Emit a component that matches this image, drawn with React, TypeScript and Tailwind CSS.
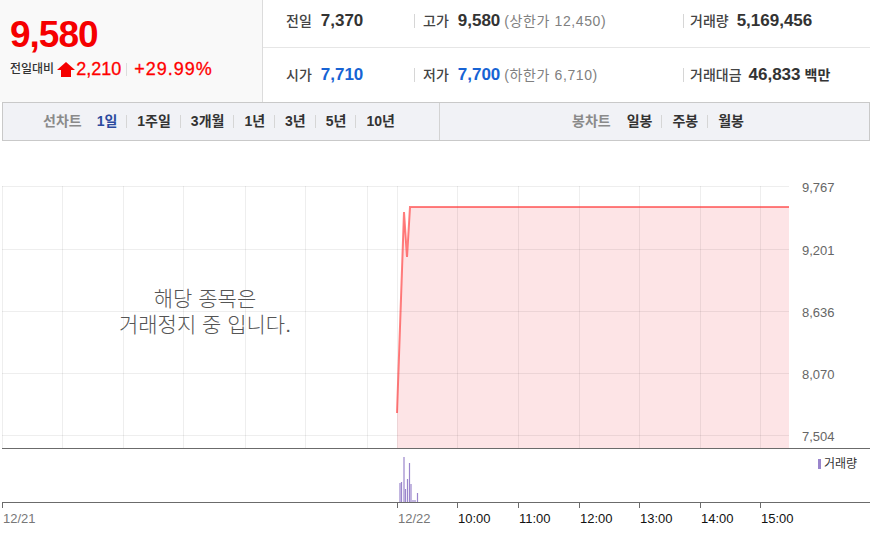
import React from "react";

const vLines = [2, 62, 123, 183, 245, 305, 367, 397, 457, 518, 579, 639, 700, 760];
const hLines = [186, 249, 311, 373, 435];
const yLabels = [
  { y: 186, t: "9,767" },
  { y: 249, t: "9,201" },
  { y: 311, t: "8,636" },
  { y: 373, t: "8,070" },
  { y: 435, t: "7,504" },
];
const ticks = [
  { x: 2, t: "12/21", gray: true },
  { x: 397, t: "12/22", gray: true },
  { x: 457, t: "10:00" },
  { x: 518, t: "11:00" },
  { x: 579, t: "12:00" },
  { x: 639, t: "13:00" },
  { x: 700, t: "14:00" },
  { x: 760, t: "15:00" },
];
const bars = [
  [400, 483],
  [401.5, 482],
  [404, 457],
  [405.5, 489],
  [407.5, 479],
  [409.5, 463],
  [411, 484],
  [413, 500],
  [415, 500],
  [417.5, 493],
];

function Sep({ h = 14, c = "#d6d6d6" }: { h?: number; c?: string }) {
  return <span className="inline-block w-px" style={{ height: h, background: c }} />;
}

function Chart() {
  const linePts = "397,413 404,212 407,257 410,207 789,207";
  const fillPts = "397,448 397,413 404,212 407,257 410,207 789,207 789,448";
  return (
    <svg width={870} height={406} viewBox="0 141 870 406" className="block">
      <polygon points={fillPts} fill="#fde4e6" />
      {hLines.map((y) => (
        <line key={y} x1={2} x2={789} y1={y + 0.5} y2={y + 0.5} stroke="rgba(0,0,0,0.065)" strokeWidth={1} />
      ))}
      {vLines.map((x) => (
        <line key={x} x1={x + 0.5} x2={x + 0.5} y1={186} y2={448} stroke="rgba(0,0,0,0.065)" strokeWidth={1} />
      ))}
      <polyline points={linePts} fill="none" stroke="#ff2a2a" strokeOpacity={0.6} strokeWidth={2} strokeLinejoin="miter" />
      {yLabels.map((l) => (
        <text key={l.t} x={802} y={l.y + 5.5} fontSize={13} fill="#666" fontFamily="Liberation Sans, Arial, sans-serif">
          {l.t}
        </text>
      ))}
      <line x1={2} x2={870} y1={448.5} y2={448.5} stroke="#6b6b6b" strokeWidth={1} />
      {bars.map(([x, y], i) => (
        <line key={i} x1={x} x2={x} y1={y} y2={502} stroke="#9a85cc" strokeWidth={1.2} />
      ))}
      <rect x={818} y={459} width={3} height={10} fill="#9a85cc" />
      <text x={824} y={468} fontSize={12} fill="#333" fontFamily="Noto Sans CJK KR, sans-serif">
        거래량
      </text>
      <line x1={2} x2={870} y1={502.5} y2={502.5} stroke="#6b6b6b" strokeWidth={1} />
      {ticks.map((t) => (
        <g key={t.t}>
          <line x1={t.x + 0.5} x2={t.x + 0.5} y1={502} y2={508} stroke="#6b6b6b" strokeWidth={1} />
          <text
            x={t.x + 1}
            y={523}
            fontSize={13}
            fill={t.gray ? "#777" : "#111"}
            fontFamily="Liberation Sans, Arial, sans-serif"
          >
            {t.t}
          </text>
        </g>
      ))}
    </svg>
  );
}

export default function App() {
  return (
    <div className="w-[870px] h-[547px] overflow-hidden bg-white font-['Liberation_Sans','Noto_Sans_CJK_KR',sans-serif]">
      {/* header */}
      <div className="flex h-[102px]">
        <div className="w-[263px] h-[102px] bg-[#f9f9f9] border-r border-[#dcdcdc] pl-[10px]">
          <div className="pt-[16px] text-[37px] leading-[37px] font-bold text-[#f50000] tracking-[-1px]">9,580</div>
          <div className="mt-[6px] flex items-center h-[20px]">
            <span className="text-[12px] text-[#333] font-medium">전일대비</span>
            <svg width="18" height="15" viewBox="0 0 18 15" className="ml-[3px]">
              <polygon points="9,0 18,8 14,8 14,15 4,15 4,8 0,8" fill="#f50000" />
            </svg>
            <span className="text-[18px] text-[#f00] ml-[1px] leading-[20px] [-webkit-text-stroke:0.3px_#f00]">2,210</span>
            <span className="ml-[5px] mr-[7px] inline-flex">
              <Sep h={13} c="#dddddd" />
            </span>
            <span className="text-[18px] text-[#f00] leading-[20px] tracking-[1px] [-webkit-text-stroke:0.3px_#f00]">+29.99%</span>
          </div>
        </div>
        <div className="flex-1 flex flex-col">
          <div className="h-[48px] pb-[6px] flex items-center border-b border-[#e6e6e6]">
            <div className="w-[128px] ml-[23px] flex items-baseline">
              <span className="text-[14px] text-[#444] font-medium">전일</span>
              <span className="ml-[9px] text-[17px] font-bold text-[#333]">7,370</span>
            </div>
            <Sep />
            <div className="w-[268px] pl-[8px] flex items-baseline">
              <span className="text-[14px] text-[#444] font-medium">고가</span>
              <span className="ml-[9px] text-[17px] font-bold text-[#333]">9,580</span>
              <span className="ml-[4px] text-[14px] text-[#808080] tracking-[0.6px]">(상한가 12,450)</span>
            </div>
            <Sep />
            <div className="pl-[6px] flex items-baseline">
              <span className="text-[14px] text-[#444] font-medium">거래량</span>
              <span className="ml-[8px] text-[17px] font-bold text-[#333]">5,169,456</span>
            </div>
          </div>
          <div className="flex-1 flex items-center">
            <div className="w-[128px] ml-[23px] flex items-baseline">
              <span className="text-[14px] text-[#444] font-medium">시가</span>
              <span className="ml-[9px] text-[17px] font-bold text-[#1763d4]">7,710</span>
            </div>
            <Sep />
            <div className="w-[268px] pl-[8px] flex items-baseline">
              <span className="text-[14px] text-[#444] font-medium">저가</span>
              <span className="ml-[9px] text-[17px] font-bold text-[#1763d4]">7,700</span>
              <span className="ml-[4px] text-[14px] text-[#808080] tracking-[0.6px]">(하한가 6,710)</span>
            </div>
            <Sep />
            <div className="pl-[6px] flex items-baseline">
              <span className="text-[14px] text-[#444] font-medium">거래대금</span>
              <span className="ml-[7px] text-[17px] font-bold text-[#333]">46,833</span>
              <span className="ml-[4px] text-[14px] font-bold text-[#333]">백만</span>
            </div>
          </div>
        </div>
      </div>

      {/* tab bar */}
      <div className="ml-[2px] h-[39px] border border-[#c9c9c9] bg-[#f1f2f6] flex text-[14px]">
        <div className="w-[437px] border-r border-[#d3d3d3] flex items-center pl-[40px]">
          <span className="text-[#8a8a8a] font-semibold">선차트</span>
          <span className="ml-[15px] font-bold text-[#2b4a9e]">1일</span>
          {["1주일", "3개월", "1년", "3년", "5년", "10년"].map((t) => (
            <React.Fragment key={t}>
              <span className="ml-[9px] mr-[10px] inline-flex">
                <Sep h={13} />
              </span>
              <span className="font-bold text-[#333]">{t}</span>
            </React.Fragment>
          ))}
        </div>
        <div className="flex-1 flex items-center pl-[132px]">
          <span className="text-[#8a8a8a] font-semibold">봉차트</span>
          <span className="ml-[16px] font-bold text-[#333]">일봉</span>
          {["주봉", "월봉"].map((t) => (
            <React.Fragment key={t}>
              <span className="ml-[9px] mr-[10px] inline-flex">
                <Sep h={13} />
              </span>
              <span className="font-bold text-[#333]">{t}</span>
            </React.Fragment>
          ))}
        </div>
      </div>

      {/* chart */}
      <div className="relative">
        <Chart />
        <div className="absolute left-[2px] top-[145px] w-[406px] text-center text-[21px] leading-[26px] text-[#555] font-light">
          <div>해당 종목은</div>
          <div>거래정지 중 입니다.</div>
        </div>
      </div>
    </div>
  );
}
